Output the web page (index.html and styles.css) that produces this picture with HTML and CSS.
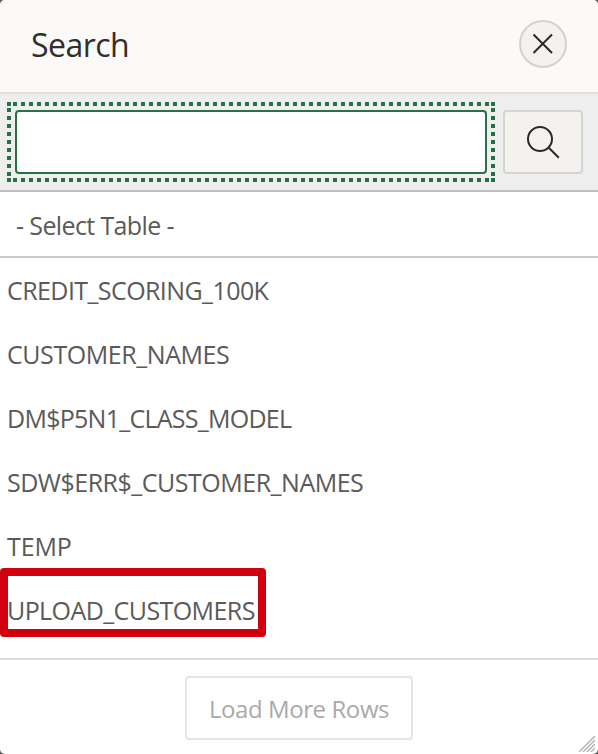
FILE: index.html
```html
<!DOCTYPE html>
<html lang="en">
<head>
<meta charset="utf-8">
<title>Search</title>
<link rel="stylesheet" href="styles.css">
</head>
<body>
<div class="dialog">
  <header class="header">
    <h1 class="title">Search</h1>
    <button class="close" aria-label="Close"><svg width="22" height="22" viewBox="0 0 22 22"><path d="M1.500 1.500l18.500 18.500M20 1.500L1.500 20"/></svg></button>
  </header>
  <div class="searchbar">
    <div class="focus"><input class="input" type="text" aria-label="Search"></div>
    <button class="go" aria-label="Go"><svg width="34" height="34" viewBox="0 0 34 34"><circle cx="14" cy="14" r="12"/><path d="M22.500 22.500l10.300 10.300"/></svg></button>
  </div>
  <div class="placeholder"><span class="label prompt">- Select Table -</span></div>
  <ul class="list">
    <li><span class="label">CREDIT_SCORING_100K</span></li>
    <li><span class="label loose">CUSTOMER_NAMES</span></li>
    <li><span class="label tight">DM$P5N1_CLASS_MODEL</span></li>
    <li><span class="label medium">SDW$ERR$_CUSTOMER_NAMES</span></li>
    <li><span class="label short">TEMP</span></li>
    <li class="marked"><span class="label">UPLOAD_CUSTOMERS</span></li>
  </ul>
  <footer class="footer">
    <button class="more">Load More Rows</button>
    <svg class="grip" width="16" height="16" viewBox="0 0 16 16"><path d="M0 16L16 0M4 16L16 4M8 16L16 8M12 16L16 12"/></svg>
  </footer>
</div>
</body>
</html>
```
FILE: styles.css
```css
*, *::before, *::after { box-sizing: border-box; }
body { margin: 0; background: #5f5d5b; font-family: "Open Sans", sans-serif; color: #5b5a59; }
.dialog { height: 754px; display: flex; flex-direction: column; background: #fff; border-radius: 5px; overflow: hidden; position: relative; }
.header { height: 94px; flex: none; display: flex; align-items: center; justify-content: space-between; padding: 0 31px 4px; background: #fbfaf8; border-bottom: 2px solid #e3e0da; }
.title { margin: 0; font-size: 32px; font-weight: 400; letter-spacing: -.55px; color: #312f2d; }
button { font-family: inherit; padding: 0; display: flex; align-items: center; justify-content: center; }
.close { width: 48px; height: 48px; border: 2px solid #d4d2ce; border-radius: 50%; background: #f3f2ee; }
svg { fill: none; stroke: #2b2927; stroke-width: 2; }
.searchbar { height: 98px; flex: none; display: flex; align-items: center; gap: 8px; padding: 0 15px 0 7px; background: #eee; border-bottom: 2px solid #bfbfbf; }
.focus {
  --green: #277245;
  --dot: linear-gradient(var(--green), var(--green));
  --across: linear-gradient(90deg, var(--green) 4px, transparent 4px);
  --down: linear-gradient(var(--green) 4px, transparent 4px);
  width: 488px; height: 80px; padding: 8px;
  background:
    var(--dot) 0 0 / 4px 4px no-repeat, var(--dot) 100% 0 / 4px 4px no-repeat,
    var(--dot) 0 100% / 4px 4px no-repeat, var(--dot) 100% 100% / 4px 4px no-repeat,
    var(--across) 6px 0 / 8px 4px repeat-x, var(--across) 6px 100% / 8px 4px repeat-x,
    var(--down) 0 6px / 4px 8px repeat-y, var(--down) 100% 6px / 4px 8px repeat-y;
}
.input { display: block; width: 100%; height: 100%; border: 2px solid #277245; border-radius: 4px; background: #fff; outline: none; }
.go { width: 80px; height: 64px; border: 2px solid #d6d4d0; border-radius: 4px; background: #f3f2ee; }
.placeholder { height: 66px; flex: none; display: flex; align-items: center; padding: 2px 16px 0; border-bottom: 2px solid #c9c9c9; font-size: 25px; }
.list { margin: 0; padding: 0; list-style: none; height: 400px; flex: none; font-size: 25px; }
.list li { height: 64px; display: flex; align-items: center; padding: 0 0 0 7px; position: relative; }
.label { white-space: nowrap; letter-spacing: -.58px; }
.prompt { letter-spacing: -.62px; }
.loose { letter-spacing: -.43px; }
.tight { letter-spacing: -.74px; }
.medium { letter-spacing: -.49px; }
.short { letter-spacing: -.1px; }
.marked::after { content: ""; position: absolute; left: 0; top: -10px; width: 266px; height: 69px; border: 8px solid #d0000f; border-radius: 4px; }
.footer { flex: 1; display: flex; align-items: center; justify-content: center; border-top: 2px solid #dedad7; padding-top: 2px; }
.more { width: 228px; height: 64px; border: 2px solid #e6e6e6; border-radius: 4px; background: #fff; color: #a9a9a9; font-size: 24px; letter-spacing: -.42px; }
.grip { position: absolute; right: 3px; bottom: 2px; stroke: #b3b3b3; stroke-width: 1.5; }
```
